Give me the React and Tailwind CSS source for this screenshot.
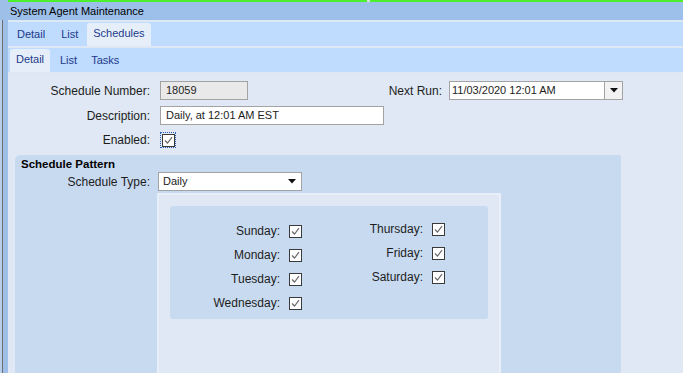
import React from 'react'

function Check({ focus }) {
  const box = (
    <span className="w-[13px] h-[13px] border border-[#3a3a3a] bg-white flex items-center justify-center">
      <svg width="9" height="9" viewBox="0 0 9 9">
        <path d="M1 4.5 L3.5 7 L8 1.2" fill="none" stroke="#6b6b6b" strokeWidth="1.2" />
      </svg>
    </span>
  )
  if (!focus) return box
  return <span className="flex w-[16px] h-[16px] pl-[1px] pt-[1px] border border-dotted border-[#2a5fb0]">{box}</span>
}

function DayRow({ label }) {
  return (
    <div className="flex items-center h-[24px]">
      <span className="w-[119px] text-right pr-[9px] text-[#1d1d1d]">{label}</span>
      <Check />
    </div>
  )
}

function Arrow() {
  return (
    <svg width="8" height="5" viewBox="0 0 8 5">
      <path d="M0 0 H8 L4 4.5 Z" fill="#111" />
    </svg>
  )
}

export default function App() {
  return (
    <div className="w-[683px] h-[373px] overflow-hidden flex bg-[#dfe8f4] text-[12px] text-[#1d1d1d] font-['Liberation_Sans',Arial,sans-serif]">
      <div className="w-[8px] flex flex-col bg-[#9dbfe8]">
        <div className="h-[20px]" />
        <div className="flex-1 flex">
          <div className="w-[2px] bg-[#b8cfe9]" />
          <div className="w-[1px] bg-[#6e6e6e]" />
        </div>
      </div>

      <div className="flex-1 flex flex-col">
        <div className="h-[2px] flex">
          <div className="w-[359px] bg-[#4cf02c]" />
          <div className="w-[3px] bg-[#d8e4d8]" />
          <div className="flex-1 bg-[#4cf02c]" />
        </div>
        <div className="h-[18px] bg-[#9dc0ea] pl-[2px] flex items-center text-[11px] text-black">System Agent Maintenance</div>
        <div className="h-[2px] bg-[#dde8f5]" />

        <div className="h-[24px] bg-[#bfdbfe] flex items-end text-[11px] text-[#1c3a8c]">
          <span className="h-[24px] flex items-center pl-[9px] pr-[8px]">Detail</span>
          <span className="h-[24px] flex items-center px-[8px]">List</span>
          <span className="h-[23px] ml-[1px] flex items-center px-[6px] pb-[2px] bg-[#e6eff9] rounded-t-[3px]">Schedules</span>
        </div>
        <div className="h-[2px] bg-[#dde8f4]" />

        <div className="h-[24px] bg-[#bfdbfe] flex items-end pl-[2px] text-[11px] text-[#1c3a8c]">
          <span className="h-[23px] w-[40px] flex items-center justify-center pb-[2px] bg-[#e6eff9] rounded-t-[3px]">Detail</span>
          <span className="h-[24px] flex items-center pl-[10px] pr-[14px]">List</span>
          <span className="h-[24px] flex items-center">Tasks</span>
        </div>
        <div className="h-[2px] bg-[#dde8f4]" />

        <div className="flex-1 flex flex-col pt-[7px]">
          <div className="flex items-center h-[19px]">
            <span className="w-[142px] text-right">Schedule Number:</span>
            <span className="ml-[10px] w-[88px] h-[19px] bg-[#e9e9e9] border border-[#a3a3a3] pl-[5px] flex items-center text-[11px]">18059</span>
            <span className="w-[194px] text-right">Next Run:</span>
            <span className="ml-[7px] w-[174px] h-[19px] bg-white border border-[#a3a3a3] flex items-center text-[11px]">
              <span className="flex-1 pl-[2px]">11/03/2020 12:01 AM</span>
              <span className="w-[18px] h-full border-l border-[#a3a3a3] bg-[#f2f2f2] flex items-center justify-center"><Arrow /></span>
            </span>
          </div>
          <div className="flex items-center h-[19px] mt-[6px]">
            <span className="w-[142px] text-right">Description:</span>
            <span className="ml-[10px] w-[224px] h-[19px] bg-white border border-[#a3a3a3] pl-[5px] flex items-center text-[11px]">Daily, at 12:01 AM EST</span>
          </div>
          <div className="flex items-center h-[18px] mt-[6px]">
            <span className="w-[142px] text-right">Enabled:</span>
            <span className="ml-[10px]"><Check focus /></span>
          </div>

          <div className="flex flex-1 mt-[6px]">
            <div className="ml-[7px] w-[606px] bg-[#c8daf0] rounded-tl-[5px] flex flex-col">
              <div className="pl-[6px] pt-[1px] h-[16px] font-bold text-[11.5px] text-black">Schedule Pattern</div>
              <div className="flex items-center h-[19px] mt-[1px]">
                <span className="w-[135px] text-right">Schedule Type:</span>
                <span className="ml-[8px] w-[144px] h-[19px] bg-white border border-[#a3a3a3] flex items-center text-[11px]">
                  <span className="flex-1 pl-[4px]">Daily</span>
                  <span className="w-[18px] flex items-center justify-center"><Arrow /></span>
                </span>
              </div>
              <div className="flex flex-1 mt-[2px]">
                <div className="ml-[142px] w-[344px] bg-[#dfe8f4] border-t-[2px] border-l-[2px] border-r-[2px] border-[#e9eff8] pt-[11px] px-[11px]">
                  <div className="h-[113px] bg-[#c8daf0] rounded-[3px] flex pt-[13px]">
                    <div className="flex flex-col">
                      <DayRow label="Sunday:" />
                      <DayRow label="Monday:" />
                      <DayRow label="Tuesday:" />
                      <DayRow label="Wednesday:" />
                    </div>
                    <div className="flex flex-col -mt-[2px] ml-[11px]">
                      <DayRow label="Thursday:" />
                      <DayRow label="Friday:" />
                      <DayRow label="Saturday:" />
                    </div>
                  </div>
                </div>
              </div>
            </div>
          </div>
        </div>
      </div>
    </div>
  )
}
